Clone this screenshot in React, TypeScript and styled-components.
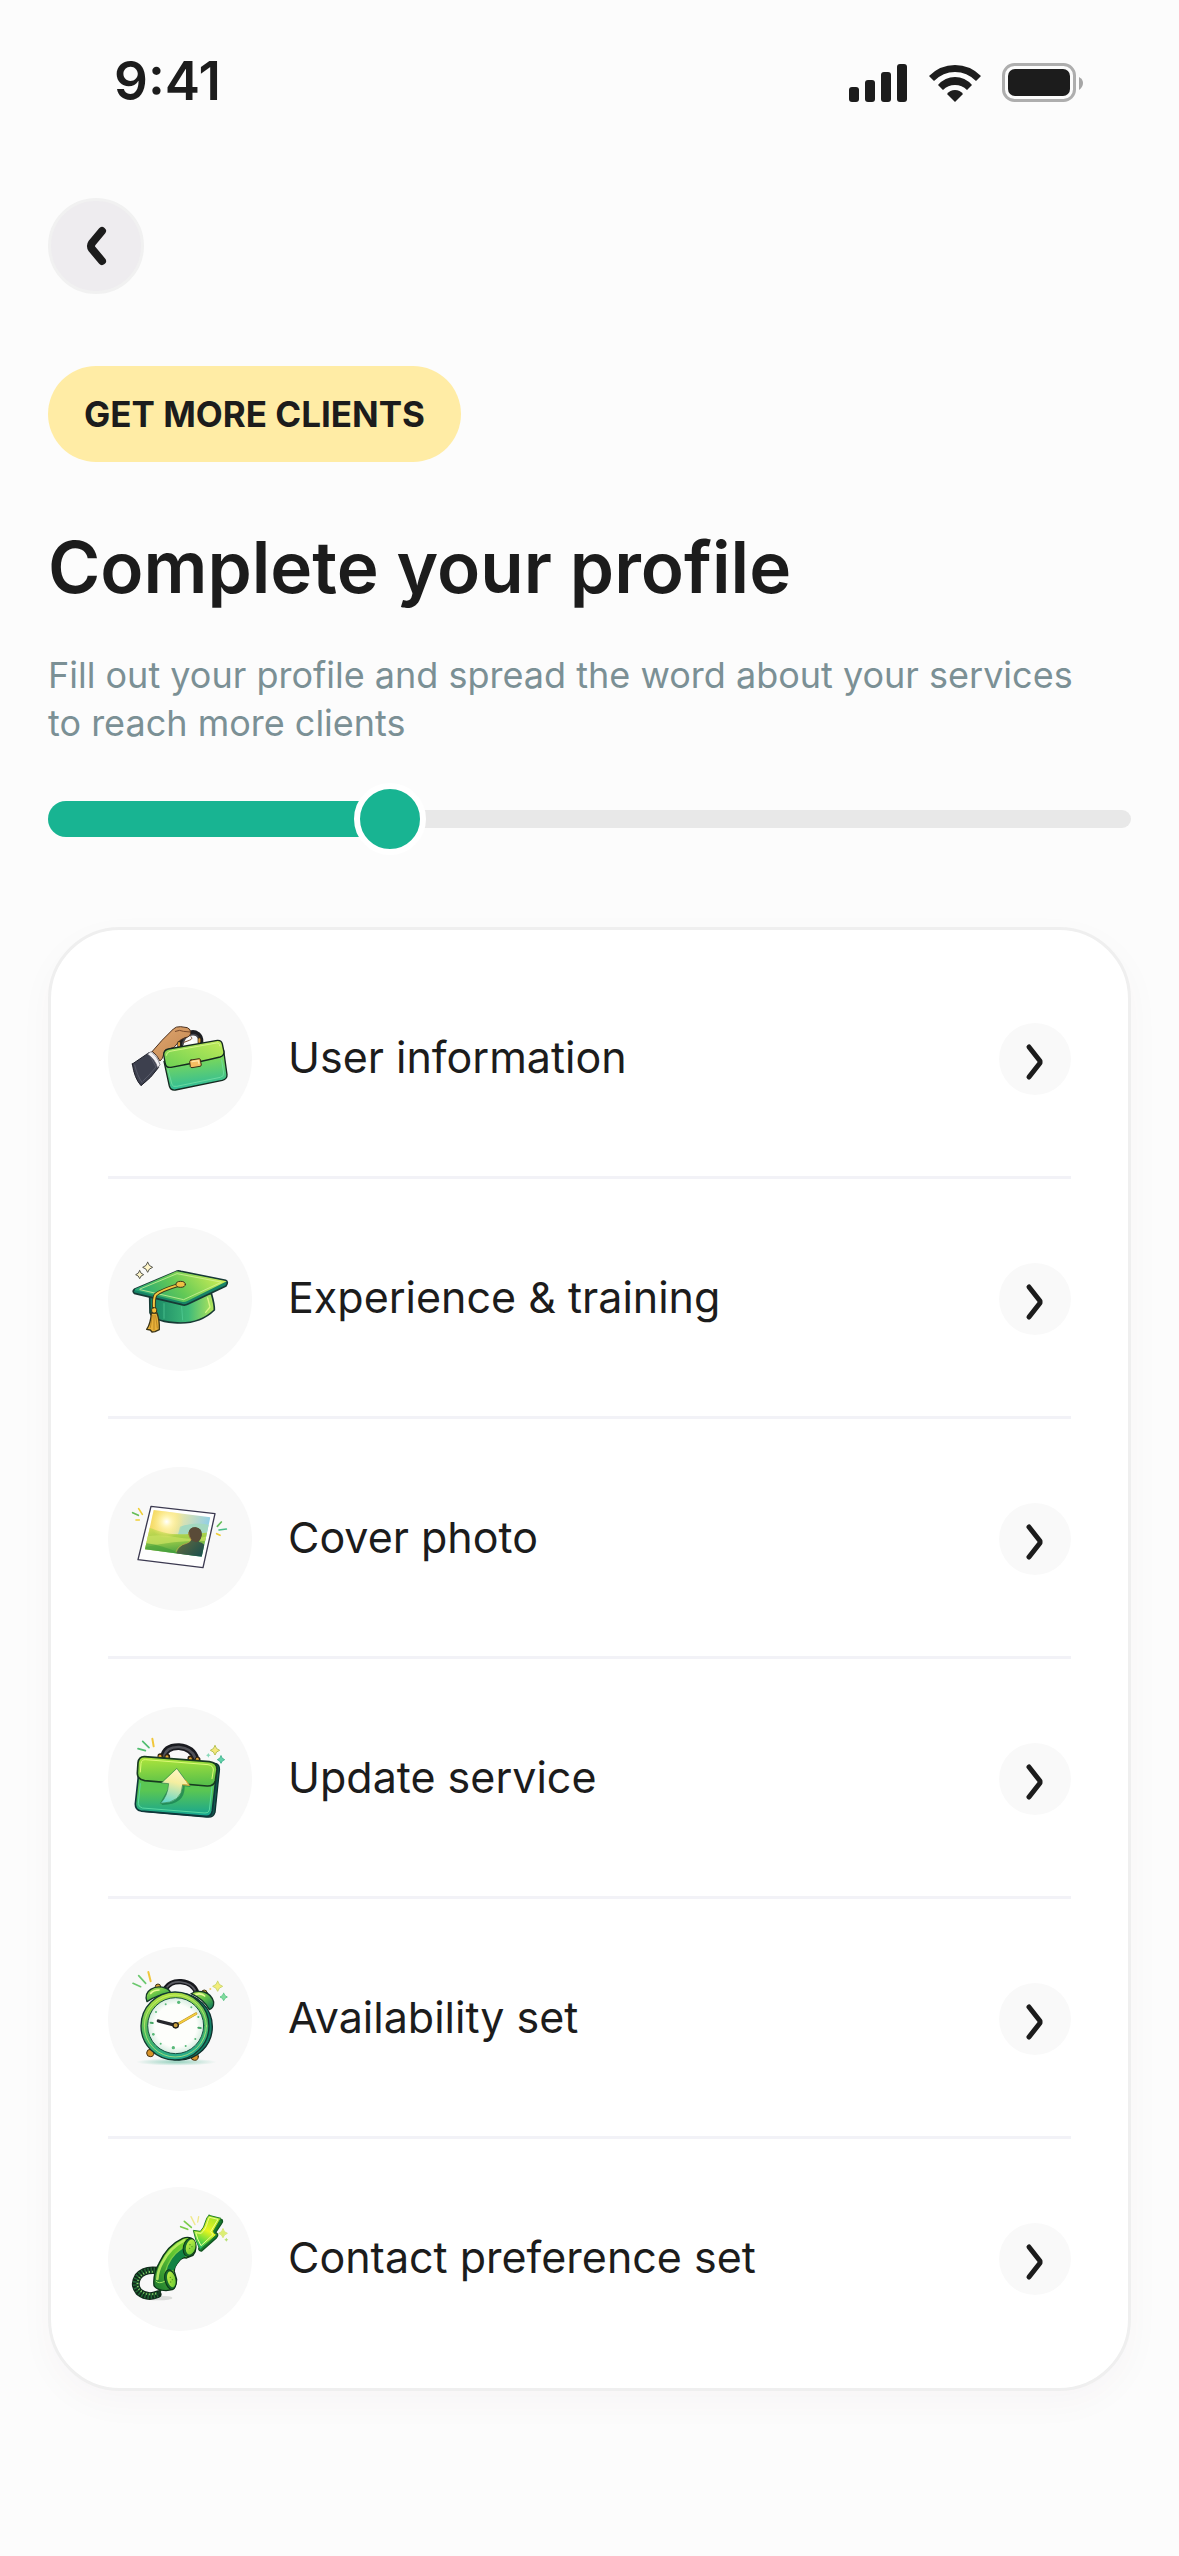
import React, { useState } from "react";
import styled, { createGlobalStyle } from "styled-components";

const GlobalStyle = createGlobalStyle`
  *, *::before, *::after { box-sizing: border-box; }
  body {
    margin: 0;
    background: #fcfcfc;
    color: #1c1c1c;
    font-family: Inter, "Noto Sans", sans-serif;
  }
`;

const Screen = styled.div`
  min-height: 100vh;
  background: #fcfcfc;
`;

const StatusBar = styled.header`
  display: flex;
  align-items: center;
  justify-content: space-between;
  height: 162px;
  padding: 0 96px 0 114px;
`;

const Clock = styled.time`
  font-size: 53px;
  line-height: 60px;
  font-weight: 600;
`;

const StatusIcons = styled.div`
  display: flex;
  align-items: center;
  gap: 21px;
  padding-top: 3px;
  svg { display: block; }
`;

const Content = styled.main`
  display: flex;
  flex-direction: column;
  align-items: flex-start;
  padding: 36px 48px 165px;
`;

const BackButton = styled.button`
  display: grid;
  place-items: center;
  width: 96px;
  height: 96px;
  padding: 0;
  border: 3px solid #f1f1f1;
  border-radius: 50%;
  background: #eeecef;
  color: inherit;
  cursor: pointer;
  svg { display: block; }
`;

const Chip = styled.p`
  margin: 72px 0 0;
  padding: 0 36px;
  border-radius: 48px;
  background: #ffeca5;
  font-size: 35px;
  line-height: 96px;
  font-weight: 700;
`;

const Title = styled.h1`
  margin: 60px 0 0;
  font-size: 71px;
  line-height: 90px;
  font-weight: 600;
`;

const Description = styled.p`
  margin: 39px 36px 36px 0;
  color: #7b9095;
  font-size: 36px;
  line-height: 48px;
`;

const Slider = styled.div`
  display: grid;
  align-items: center;
  width: 100%;
  > * { grid-area: 1 / 1; }
`;

const Track = styled.div`
  height: 18px;
  border-radius: 9px;
  background: #e8e8e8;
`;

const Fill = styled.div`
  height: 36px;
  border-radius: 18px 0 0 18px;
  background: #18b492;
`;

const Range = styled.input`
  appearance: none;
  width: 100%;
  height: 72px;
  margin: 0;
  background: transparent;
  cursor: pointer;
  &::-webkit-slider-thumb {
    appearance: none;
    width: 72px;
    height: 72px;
    border: 6px solid #ffffff;
    border-radius: 50%;
    background: #18b492;
  }
`;

const Card = styled.ul`
  width: 100%;
  margin: 72px 0 0;
  padding: 57px;
  list-style: none;
  border: 3px solid #efefef;
  border-radius: 72px;
  background: #ffffff;
  box-shadow: 0 12px 36px rgba(90, 20, 60, 0.03);
`;

const Item = styled.li`
  & + & {
    margin-top: 45px;
    padding-top: 48px;
    border-top: 3px solid #f2f2f7;
  }
`;

const RowLink = styled.a`
  display: flex;
  align-items: center;
  gap: 36px;
  color: inherit;
  text-decoration: none;
`;

const IconCircle = styled.span`
  flex: none;
  width: 144px;
  height: 144px;
  border-radius: 50%;
  background: #f8f8f8;
  svg { display: block; width: 100%; height: 100%; }
`;

const RowLabel = styled.span`
  flex: 1;
  padding-bottom: 4px;
  font-size: 43px;
  line-height: 54px;
`;

const Arrow = styled.span`
  flex: none;
  width: 72px;
  height: 72px;
  border-radius: 50%;
  background: #f9f9f9;
  svg { display: block; }
`;

const Art = ({ children }: { children: React.ReactNode }) => (
  <svg viewBox="54 51 432 432" strokeLinejoin="round" strokeLinecap="round" aria-hidden="true">
    {children}
  </svg>
);

const Sparkle = ({ x, y, r, fill, stroke = "none" }: { x: number; y: number; r: number; fill: string; stroke?: string }) => (
  <path
    d={`M${x} ${y - r}Q${x + r * 0.2} ${y - r * 0.2} ${x + r} ${y}Q${x + r * 0.2} ${y + r * 0.2} ${x} ${y + r}Q${x - r * 0.2} ${y + r * 0.2} ${x - r} ${y}Q${x - r * 0.2} ${y - r * 0.2} ${x} ${y - r}Z`}
    fill={fill}
    stroke={stroke}
    strokeWidth="3"
  />
);

const HandBagArt = () => (
  <Art>
    <defs>
      <linearGradient id="hbFlap" x1="0" y1="1" x2="1" y2="0">
        <stop offset="0" stopColor="#6bd054" />
        <stop offset="1" stopColor="#c3ec58" />
      </linearGradient>
      <linearGradient id="hbBody" x1="0" y1="0" x2="0.15" y2="1">
        <stop offset="0.3" stopColor="#78d75c" />
        <stop offset="1" stopColor="#30bc98" />
      </linearGradient>
      <linearGradient id="hbSkin" x1="0" y1="0" x2="1" y2="1">
        <stop offset="0" stopColor="#e0a871" />
        <stop offset="1" stopColor="#c1844e" />
      </linearGradient>
    </defs>
    <path d="M127 282L177 248Q199 266 206 292Q184 324 153 347Q133 325 127 282Z" fill="#3d404e" stroke="#1d1e28" strokeWidth="3" />
    <path d="M134 285Q142 318 156 337M180 258L198 291Q176 318 159 333" fill="none" stroke="#575a68" strokeWidth="3" />
    <path d="M172 252L183 245Q203 260 210 284L203 294Q196 268 172 252Z" fill="#f1eff2" stroke="#55555f" strokeWidth="2" />
    <path d="M272 226Q276 201 290 193Q310 182 323 192Q334 200 333 216" fill="none" stroke="#1d1e22" strokeWidth="14" />
    <path d="M278 224Q281 206 293 198Q310 190 320 197Q327 203 328 212" fill="none" stroke="#43444b" strokeWidth="5" />
    <path d="M282 219L305 206L313 220Z" fill="#ffffff" />
    <path d="M187 244L216 211L250 177Q258 169 272 170L292 173Q303 177 302 190Q300 201 285 203L271 210L252 232L225 241L217 265L210 273Q202 255 187 244Z" fill="url(#hbSkin)" stroke="#4b301f" strokeWidth="3" />
    <path d="M256 184Q270 178 280 184L300 186M303 200Q310 207 298 211L282 217" fill="none" stroke="#7a4b2c" strokeWidth="3" />
    <path d="M267 218v13M328 206v13" stroke="#332815" strokeWidth="10" />
    <path d="M267 219v8M328 208v8" stroke="#dc9e3b" strokeWidth="6" />
    <path d="M222 274L238 348Q242 362 256 360L397 331Q412 327 411 314L401 242Z" fill="url(#hbBody)" stroke="#14291f" strokeWidth="4" />
    <path d="M234 298L246 344Q249 351 260 349L391 322Q402 320 401 309L395 270" fill="none" stroke="#73dfa4" strokeWidth="3" opacity="0.8" />
    <path d="M235 237L382 211Q394 210 397 222L402 246Q402 257 390 261Q330 276 243 292Q229 294 226 282L221 254Q221 240 235 237Z" fill="url(#hbFlap)" stroke="#14291f" strokeWidth="4" />
    <path d="M229 256Q230 246 240 244L379 219Q388 218 390 228" fill="none" stroke="#d4f58a" strokeWidth="3" />
    <path d="M303 270L328 266Q331 266 331 270L334 285Q334 288 330 289L306 293Q302 293 301 290L299 275Q299 271 303 270Z" fill="#f5bd62" stroke="#3b2c15" strokeWidth="3" />
    <path d="M306 275L325 272L327 281" fill="none" stroke="#ffe5a8" strokeWidth="4" />
  </Art>
);

const GraduationArt = () => (
  <Art>
    <defs>
      <linearGradient id="gcTop" x1="0" y1="0.6" x2="1" y2="0.3">
        <stop offset="0" stopColor="#25a677" />
        <stop offset="0.45" stopColor="#63c956" />
        <stop offset="1" stopColor="#d4ef55" />
      </linearGradient>
      <linearGradient id="gcBase" x1="0" y1="0" x2="1" y2="0">
        <stop offset="0" stopColor="#168263" />
        <stop offset="0.6" stopColor="#3fba79" />
        <stop offset="1" stopColor="#b6e75a" />
      </linearGradient>
    </defs>
    <path d="M179 258L180 308Q188 332 252 338Q327 345 373 300Q374 286 364 250Z" fill="url(#gcBase)" stroke="#173a35" strokeWidth="5" />
    <path d="M222 281V325M275 290L278 330" stroke="#54cf99" strokeWidth="3" opacity="0.7" />
    <path d="M353 264L360 291L347 307" fill="none" stroke="#d8f587" strokeWidth="4" />
    <path d="M133 238L257 185Q264 181 273 184L407 211Q414 214 411 222L408 228L294 282Q285 287 276 284L133 250Q126 244 133 238Z" fill="#178567" stroke="#173a35" strokeWidth="5" />
    <path d="M135 237L260 184L410 214L292 273Q284 277 275 275L135 241Z" fill="url(#gcTop)" />
    <path d="M150 237L261 191L392 216M150 239L281 269L394 217" fill="none" stroke="#d5f49a" strokeWidth="3" opacity="0.75" />
    <path d="M268 224Q212 241 197 254Q190 264 192 297" fill="none" stroke="#3a3518" strokeWidth="11" />
    <path d="M268 224Q212 241 197 254Q190 264 192 297" fill="none" stroke="#f2c642" strokeWidth="6" />
    <ellipse cx="272" cy="223" rx="14" ry="9" fill="#efc044" stroke="#3a3518" strokeWidth="3" />
    <path d="M184 309Q182 341 170 358L181 360L186 366L195 365L208 359Q209 330 201 309Z" fill="#e8b13a" stroke="#3a3518" strokeWidth="4" />
    <path d="M187 316L181 353M192 316V360M197 317L202 354" stroke="#a8741a" strokeWidth="2" />
    <rect x="185" y="293" width="15" height="16" rx="6" fill="#f7bd37" stroke="#3a3518" strokeWidth="3" />
    <Sparkle x={173} y={172} r={15} fill="#fff6c9" stroke="#57574d" />
    <Sparkle x={149} y={194} r={12} fill="#fff6c9" stroke="#57574d" />
  </Art>
);

const PhotoArt = () => (
  <Art>
    <defs>
      <linearGradient id="phSky" x1="0" y1="0" x2="1" y2="0.25">
        <stop offset="0" stopColor="#f2cf45" />
        <stop offset="0.45" stopColor="#f8ea9c" />
        <stop offset="1" stopColor="#8ccdea" />
      </linearGradient>
      <linearGradient id="phField" x1="0" y1="0" x2="0.2" y2="1">
        <stop offset="0" stopColor="#dedf5a" />
        <stop offset="0.5" stopColor="#9fce48" />
        <stop offset="1" stopColor="#369643" />
      </linearGradient>
      <radialGradient id="phSun">
        <stop offset="0" stopColor="#ffffff" />
        <stop offset="0.25" stopColor="#fff7bd" />
        <stop offset="1" stopColor="#ffe568" stopOpacity="0" />
      </radialGradient>
      <linearGradient id="phBack" x1="0" y1="0" x2="1" y2="1">
        <stop offset="0" stopColor="#7f7136" />
        <stop offset="1" stopColor="#104d51" />
      </linearGradient>
      <clipPath id="phClip"><path d="M191 180L361 202L335 320L165 298Z" /></clipPath>
    </defs>
    <path d="M183 169L375 191L339 353L144 329Z" fill="#fefefe" stroke="#3b3950" strokeWidth="4" />
    <g clipPath="url(#phClip)">
      <path d="M160 175H366V325H160Z" fill="url(#phSky)" />
      <path d="M270 230Q320 212 370 228V270H260Z" fill="#a3d8c0" />
      <path d="M160 225Q200 243 232 250T370 246V325H160Z" fill="url(#phField)" />
      <path d="M160 262Q200 250 260 262T370 252V275Q290 265 160 292Z" fill="#cbe163" opacity="0.7" />
      <path d="M160 278Q210 284 260 305V325H160Z" fill="#3f9c38" opacity="0.6" />
      <circle cx="230" cy="215" r="50" fill="url(#phSun)" />
      <path d="M257 325Q260 287 290 280Q303 275 304 266Q294 257 296 247Q300 231 317 232Q337 235 335 256Q333 269 326 275Q345 280 348 296V325Z" fill="url(#phBack)" />
      <path d="M304 271Q294 258 296 247Q300 231 317 232Q337 235 335 256Q332 274 318 277Z" fill="#5a4b38" />
      <path d="M258 305Q263 286 291 280Q303 275 303 268Q296 260 296 247" fill="none" stroke="#dea746" strokeWidth="2" opacity="0.8" />
    </g>
    <path d="M128 188L145 196M382 229L394 216" stroke="#66bd58" strokeWidth="5" />
    <path d="M146 176L157 193M138 210H148M380 251L390 256" stroke="#f0cf36" strokeWidth="5" />
    <path d="M387 240L409 237" stroke="#48be86" strokeWidth="5" />
  </Art>
);

const UpdateArt = () => (
  <Art>
    <defs>
      <linearGradient id="upFlap" x1="0" y1="0" x2="0.1" y2="1">
        <stop offset="0" stopColor="#b1e63a" />
        <stop offset="1" stopColor="#58c04a" />
      </linearGradient>
      <linearGradient id="upBody" x1="0" y1="0" x2="0" y2="1">
        <stop offset="0.35" stopColor="#5ac653" />
        <stop offset="1" stopColor="#14a493" />
      </linearGradient>
      <linearGradient id="upArrow" x1="0.6" y1="0" x2="0.4" y2="1">
        <stop offset="0" stopColor="#fff5c5" />
        <stop offset="0.4" stopColor="#f5eea0" />
        <stop offset="1" stopColor="#67d8ca" />
      </linearGradient>
    </defs>
    <path d="M360 218L379 221Q390 226 388 242L375 367Q370 383 352 381L155 364L330 350Z" fill="#12584e" stroke="#0d3030" strokeWidth="4" />
    <path d="M220 202Q226 169 267 170Q309 174 319 209" fill="none" stroke="#1a1b20" strokeWidth="20" />
    <path d="M222 198Q229 170 267 171Q305 174 316 204" fill="none" stroke="#515258" strokeWidth="8" />
    <path d="M211 201v-3M232 202v-2M301 208v-3M323 211v-2" stroke="#302312" strokeWidth="17" />
    <path d="M210 199v4M231 200v4M301 206v4M322 208v4" stroke="#e2a332" strokeWidth="9" />
    <path d="M145 260L136 342Q136 360 153 363L348 379Q364 380 367 362L377 272Z" fill="url(#upBody)" stroke="#0e373a" strokeWidth="5" />
    <path d="M151 281L145 340Q145 351 157 354L345 369Q356 370 358 360L366 290" fill="none" stroke="#57d8a0" strokeWidth="3" />
    <path d="M164 200L358 215Q382 218 381 239L376 272Q371 289 351 288L164 272Q142 268 142 250L144 218Q147 199 164 200Z" fill="url(#upFlap)" stroke="#173a20" strokeWidth="5" />
    <path d="M151 246L153 220Q155 208 167 209L354 224Q370 226 370 240L366 266" fill="none" stroke="#dcfa76" strokeWidth="3" />
    <path d="M266 242L302 291L284 289Q286 344 217 345L211 338Z" fill="#187c50" opacity="0.7" />
    <path d="M261 236L298 286L278 284Q276 339 211 340Q233 319 236 281L215 279Z" fill="url(#upArrow)" stroke="#35884f" strokeWidth="2" />
    <path d="M286 270L298 286L279 284" fill="none" stroke="#eeae36" strokeWidth="3" />
    <path d="M144 176L166 182M158 154L177 173" stroke="#51bd70" strokeWidth="5" />
    <path d="M187 146L191 169" stroke="#f1c73a" strokeWidth="6" />
    <Sparkle x={375} y={181} r={14} fill="#f5e77c" stroke="#b7c24b" />
    <Sparkle x={393} y={209} r={11} fill="#62d2aa" stroke="#48b893" />
    <Sparkle x={355} y={196} r={7} fill="#87d9b9" />
  </Art>
);

const AlarmArt = () => (
  <Art>
    <defs>
      <linearGradient id="alRim" x1="0.4" y1="0" x2="0.6" y2="1">
        <stop offset="0" stopColor="#b5e43f" />
        <stop offset="0.5" stopColor="#4bb85c" />
        <stop offset="1" stopColor="#23aa91" />
      </linearGradient>
      <linearGradient id="alBell" x1="0" y1="0" x2="0.8" y2="1">
        <stop offset="0" stopColor="#c2ec50" />
        <stop offset="0.5" stopColor="#65c348" />
        <stop offset="1" stopColor="#127b5a" />
      </linearGradient>
      <radialGradient id="alFace">
        <stop offset="0.75" stopColor="#fdfefb" />
        <stop offset="1" stopColor="#d6ede0" />
      </radialGradient>
      <radialGradient id="alShade">
        <stop offset="0" stopColor="#69bfa3" />
        <stop offset="1" stopColor="#69bfa3" stopOpacity="0" />
      </radialGradient>
    </defs>
    <ellipse cx="259" cy="396" rx="121" ry="11" fill="url(#alShade)" opacity="0.7" />
    <path d="M228 174Q242 153 273 155Q313 159 321 191" fill="none" stroke="#17181d" strokeWidth="16" />
    <path d="M231 171Q246 154 272 156Q304 160 315 180" fill="none" stroke="#5b5c63" strokeWidth="5" />
    <circle cx="204" cy="170" r="8" fill="#dca93d" stroke="#3c3213" strokeWidth="3" />
    <circle cx="343" cy="188" r="8" fill="#dca93d" stroke="#3c3213" strokeWidth="3" />
    <path d="M171 215Q162 191 182 178Q201 166 226 174Q239 178 242 190Q204 192 171 215Z" fill="url(#alBell)" stroke="#143728" strokeWidth="4" />
    <path d="M303 191Q318 180 342 186Q365 193 371 216Q372 234 358 239Q341 207 303 191Z" fill="url(#alBell)" stroke="#143728" strokeWidth="4" />
    <path d="M182 190Q191 180 207 180M318 193Q334 189 344 198" fill="none" stroke="#e8fa98" strokeWidth="5" />
    <circle cx="181" cy="369" r="11" fill="#d9942a" stroke="#443013" strokeWidth="3" />
    <circle cx="314" cy="380" r="11" fill="#d9942a" stroke="#443013" strokeWidth="3" />
    <circle cx="267" cy="290" r="100" fill="#128067" stroke="#0f2e2b" strokeWidth="4" />
    <circle cx="255" cy="288" r="102" fill="url(#alRim)" stroke="#123a31" strokeWidth="4" />
    <circle cx="256" cy="288" r="93" fill="none" stroke="#d5f178" strokeWidth="3" opacity="0.65" />
    <circle cx="257" cy="287" r="84" fill="url(#alFace)" stroke="#165041" strokeWidth="3" />
    <g fill="#58b978">
      <circle cx="266" cy="217" r="5" /><circle cx="227" cy="223" r="3" /><circle cx="304" cy="232" r="3" />
      <circle cx="198" cy="246" r="3" /><circle cx="325" cy="261" r="3" /><circle cx="190" cy="313" r="4" />
      <circle cx="316" cy="327" r="3" /><circle cx="212" cy="341" r="3" /><circle cx="250" cy="353" r="5" /><circle cx="287" cy="348" r="3" />
    </g>
    <path d="M182 278L188 279M325 293L332 294" stroke="#47a866" strokeWidth="6" />
    <path d="M257 286L205 273" stroke="#25272b" strokeWidth="10" />
    <path d="M257 286L318 251" stroke="#b98a22" strokeWidth="8" />
    <path d="M257 286L318 251" stroke="#f4cf3f" strokeWidth="5" />
    <circle cx="257" cy="286" r="8" fill="#c9a03d" stroke="#1f1e1a" strokeWidth="4" />
    <path d="M129 160L152 170M146 137L167 160" stroke="#6cc86f" strokeWidth="5" />
    <path d="M175 126L182 154" stroke="#f1c73d" strokeWidth="6" />
    <Sparkle x={383} y={169} r={15} fill="#f3ed79" stroke="#ccd76b" />
    <Sparkle x={401} y={201} r={11} fill="#81dd9d" stroke="#66c88d" />
    <circle cx="361" cy="177" r="3" fill="#f1cc62" />
  </Art>
);

const PhoneArt = () => (
  <Art>
    <defs>
      <linearGradient id="pnBody" x1="1" y1="0" x2="0" y2="1">
        <stop offset="0" stopColor="#8ee22d" />
        <stop offset="0.5" stopColor="#58bf32" />
        <stop offset="1" stopColor="#1a7430" />
      </linearGradient>
      <linearGradient id="pnCup" x1="0" y1="0" x2="1" y2="1">
        <stop offset="0" stopColor="#d3f64a" />
        <stop offset="1" stopColor="#5cc532" />
      </linearGradient>
      <linearGradient id="pnArrow" x1="0.7" y1="0" x2="0.3" y2="1">
        <stop offset="0" stopColor="#a5e52b" />
        <stop offset="0.45" stopColor="#e8f51e" />
        <stop offset="0.75" stopColor="#6fdc3b" />
        <stop offset="1" stopColor="#14b674" />
      </linearGradient>
    </defs>
    <ellipse cx="205" cy="384" rx="42" ry="7" fill="#cfd2cf" opacity="0.7" />
    <path d="M204 302Q162 296 144 320Q129 344 147 366Q172 386 203 373" fill="none" stroke="#10291a" strokeWidth="23" />
    <path d="M204 302Q162 296 144 320Q129 344 147 366Q172 386 203 373" fill="none" stroke="#236b36" strokeWidth="17" strokeLinecap="butt" strokeDasharray="4 5" />
    <path d="M198 306Q164 301 149 323Q135 344 151 362Q174 379 203 369" fill="none" stroke="#8bd069" strokeWidth="6" strokeLinecap="butt" strokeDasharray="3 6" />
    <path d="M205 372L216 350" stroke="#153e21" strokeWidth="8" />
    <path d="M192 347Q188 314 207 280Q232 226 278 205Q294 199 304 205L316 219Q322 240 309 256L290 264Q275 260 266 275Q252 291 253 305L260 328Q260 351 247 359L228 362Q200 361 192 347Z" fill="url(#pnBody)" stroke="#0d3419" strokeWidth="4" />
    <path d="M228 302Q238 260 281 234L290 259Q270 261 252 299Z" fill="#118344" />
    <path d="M202 327Q204 300 217 278Q240 232 283 211" fill="none" stroke="#c5f266" strokeWidth="8" opacity="0.85" />
    <path d="M226 307Q236 263 276 234" fill="none" stroke="#78cb47" strokeWidth="4" />
    <path d="M198 334Q207 343 224 334" fill="none" stroke="#a3e760" strokeWidth="3" />
    <ellipse cx="298" cy="232" rx="18" ry="28" fill="#176b2d" stroke="#0d3419" strokeWidth="3" transform="rotate(14 298 232)" />
    <ellipse cx="302" cy="231" rx="14" ry="23" fill="url(#pnCup)" transform="rotate(14 302 231)" />
    <ellipse cx="241" cy="329" rx="16" ry="30" fill="#176b2d" stroke="#0d3419" strokeWidth="3" transform="rotate(-13 241 329)" />
    <ellipse cx="244" cy="328" rx="12" ry="24" fill="url(#pnCup)" transform="rotate(-13 244 328)" />
    <g fill="#4d8f24">
      <circle cx="300" cy="224" r="2" /><circle cx="306" cy="230" r="2" /><circle cx="299" cy="235" r="2" />
      <circle cx="241" cy="322" r="2" /><circle cx="247" cy="329" r="2" /><circle cx="242" cy="336" r="2" />
    </g>
    <path d="M359 142L397 150Q399 155 395 160L377 187L383 193Q385 199 379 204L335 243Q327 243 326 237Z" fill="#157d2d" stroke="#125421" strokeWidth="4" />
    <path d="M357 136L393 145L370 184Q371 191 380 194L330 239Q316 213 310 181L331 184Q342 174 347 153Q350 140 357 136Z" fill="url(#pnArrow)" stroke="#247f2c" strokeWidth="3" />
    <path d="M359 142L384 148L362 185L369 194L333 227Q322 208 317 188L333 190Q347 180 353 155Z" fill="none" stroke="#ecff8e" strokeWidth="3" />
    <path d="M272 170L293 178M283 154L304 172" stroke="#7acb48" strokeWidth="5" />
    <path d="M303 140L315 164M326 140L323 156" stroke="#f0e989" strokeWidth="4" />
    <Sparkle x={399} y={190} r={13} fill="#dcef72" stroke="#d8e86e" />
    <Sparkle x={409} y={209} r={6} fill="#b6df73" />
  </Art>
);

const SignalIcon = () => (
  <svg width="59" height="39" viewBox="0 0 59 39" fill="#1c1c1c" aria-hidden="true">
    <rect x="0" y="24" width="10" height="15" rx="3" />
    <rect x="16" y="17" width="10" height="22" rx="3" />
    <rect x="32" y="9" width="10" height="30" rx="3" />
    <rect x="48" y="1" width="10" height="38" rx="3" />
  </svg>
);

const WifiIcon = () => (
  <svg width="52" height="39" viewBox="0 0 52 39" fill="#1c1c1c" aria-hidden="true">
    <path d="M0 13Q11 2 26 2T52 13L47 18Q38 9 26 9T5 18Z" />
    <path d="M9 22Q16 14 26 14T43 22L38 27Q33 22 26 22T14 27Z" />
    <path d="M18 31Q21 27 26 27T34 31L26 39Z" />
  </svg>
);

const BatteryIcon = () => (
  <svg width="81" height="39" viewBox="0 0 81 39" aria-hidden="true">
    <rect x="1.5" y="1.5" width="71" height="36" rx="11" fill="none" stroke="#aeaeae" strokeWidth="3" />
    <rect x="6" y="6" width="62" height="27" rx="7" fill="#1c1c1c" />
    <path d="M77 14Q81 16 81 20T77 27Z" fill="#a6a6a6" />
  </svg>
);

const steps = [
  { label: "User information", slug: "user-information", Picture: HandBagArt },
  { label: "Experience & training", slug: "experience", Picture: GraduationArt },
  { label: "Cover photo", slug: "cover-photo", Picture: PhotoArt },
  { label: "Update service", slug: "service", Picture: UpdateArt },
  { label: "Availability set", slug: "availability", Picture: AlarmArt },
  { label: "Contact preference set", slug: "contact", Picture: PhoneArt },
];

export default function App() {
  const [progress, setProgress] = useState(30.3);
  return (
    <>
      <GlobalStyle />
      <Screen>
        <StatusBar>
          <Clock>9:41</Clock>
          <StatusIcons>
            <SignalIcon />
            <WifiIcon />
            <BatteryIcon />
          </StatusIcons>
        </StatusBar>
        <Content>
          <BackButton type="button" aria-label="Back">
            <svg width="90" height="90" viewBox="0 0 90 90" fill="none" stroke="#1c1c1c" strokeWidth="8" strokeLinecap="round" strokeLinejoin="round">
              <path d="M51 30L41 42Q39 45 41 48L51 60" />
            </svg>
          </BackButton>
          <Chip>GET MORE CLIENTS</Chip>
          <Title>Complete your profile</Title>
          <Description>
            Fill out your profile and spread the word about your services to reach more clients
          </Description>
          <Slider>
            <Track />
            <Fill style={{ width: `calc(36px + (100% - 72px) * ${progress / 100})` }} />
            <Range
              type="range"
              min={0}
              max={100}
              step={0.1}
              value={progress}
              aria-label="Profile completion"
              onChange={(e) => setProgress(Number(e.target.value))}
            />
          </Slider>
          <Card>
            {steps.map(({ label, slug, Picture }) => (
              <Item key={slug}>
                <RowLink href={`#${slug}`}>
                  <IconCircle><Picture /></IconCircle>
                  <RowLabel>{label}</RowLabel>
                  <Arrow>
                    <svg width="72" height="72" viewBox="0 0 72 72" fill="none" stroke="#1c1c1c" strokeWidth="5" strokeLinecap="round" strokeLinejoin="round" aria-hidden="true">
                      <path d="M30 24L41 38Q41 39 41 40L30 54" />
                    </svg>
                  </Arrow>
                </RowLink>
              </Item>
            ))}
          </Card>
        </Content>
      </Screen>
    </>
  );
}
